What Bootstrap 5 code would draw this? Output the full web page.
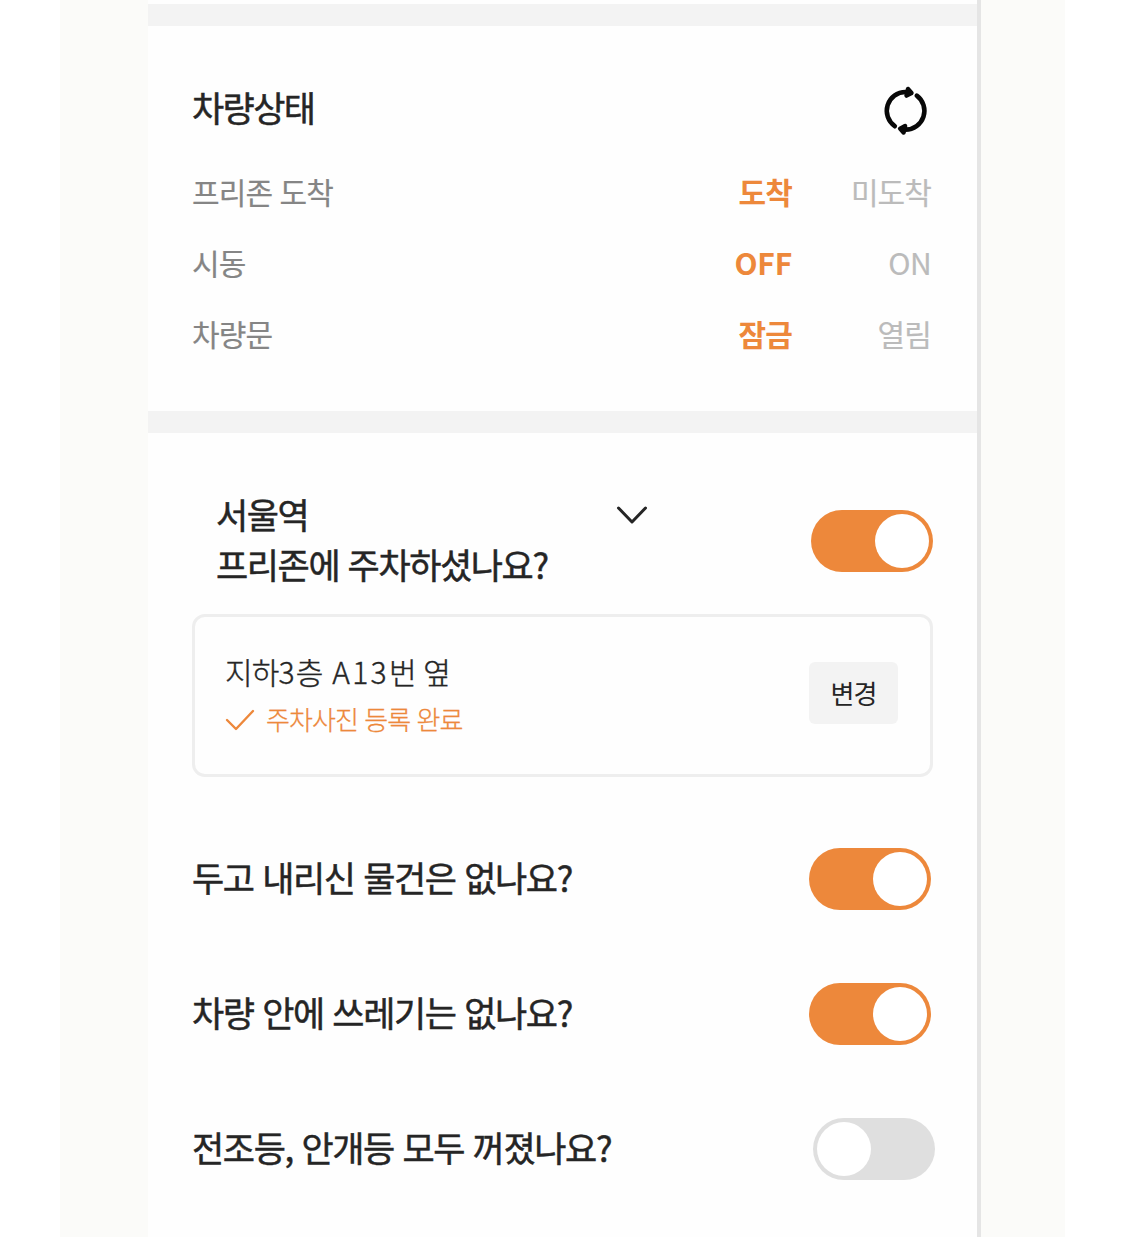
<!DOCTYPE html>
<html lang="ko">
<head>
<meta charset="utf-8">
<meta name="viewport" content="width=device-width, initial-scale=1">
<title>차량상태</title>
<link href="https://cdn.jsdelivr.net/npm/bootstrap@5.3.0/dist/css/bootstrap.min.css" rel="stylesheet">
<style>
  body { font-family: "Noto Sans CJK KR", sans-serif; background: #fff; color: #252525; }
  .stage { width: 1005px; height: 1237px; margin-left: 60px; padding-left: 88px; background: #fbfbf9; }
  .phone { width: 833px; height: 1237px; border-right: 4px solid #e5e5e5; background: #fefefe; padding-top: 4px; }
  .divider { height: 22px; background: #f3f3f3; }
  .status { height: 385px; padding: 56px 46px 0 44px; }
  .heading { font-size: 35px; font-weight: 400; -webkit-text-stroke: .5px currentColor; line-height: 50px; letter-spacing: -1.4px; white-space: nowrap; }
  .status-head { height: 50px; margin-bottom: 24px; }
  .status-head .heading { letter-spacing: -1.6px; }
  .refresh { width: 50px; height: 50px; margin-top: 4px; }
  .status-row { height: 71px; font-size: 30px; letter-spacing: -.9px; line-height: 71px; color: #858585; -webkit-text-stroke: .2px currentColor; }
  .picked { width: 120px; color: #ed883b; font-weight: 700; -webkit-text-stroke: 0; }
  .other { width: 139px; color: #bbb; }
  .latin { letter-spacing: -.2px; }
  .other.latin { letter-spacing: -.6px; padding-right: 0; }
  .checks { padding: 56px 44px 0 44px; }
  .zone { height: 125px; padding-left: 24px; }
  .zone .toggle { margin-top: 21px; }
  .chev { width: 34px; height: 22px; margin-left: 307px; }
  .toggle { width: 122px; height: 62px; border: 0; border-radius: 31px; padding: 0 4px; background: #ed883b; flex: none; }
  .toggle.off { background: #dfdfdf; }
  .knob { width: 54px; height: 54px; border-radius: 50%; background: #fff; }
  .spot { height: 163px; margin-bottom: 34px; border: 3px solid #eee; border-radius: 13px; padding: 0 32px 5px 30px; }
  .spot-text { padding-top: 3px; }
  .spot-name { font-size: 30px; font-weight: 300; line-height: 48px; letter-spacing: -.8px; -webkit-text-stroke: .4px currentColor; }
  .spot-name .num { letter-spacing: 1.2px; }
  .spot-name .bay { letter-spacing: 2.3px; margin-left: 2px; }
  .spot-done { font-size: 26px; font-weight: 300; line-height: 48px; letter-spacing: -.95px; color: #ed883b; -webkit-text-stroke: .3px currentColor; }
  .tick { width: 30px; height: 24px; margin-right: 11px; }
  .change { width: 89px; height: 62px; border: 0; border-radius: 6px; background: #f3f3f3; color: #252525; font-size: 26px; letter-spacing: -1px; padding: 0 0 2px; }
  .question { height: 135px; padding-right: 2px; }
  .question .heading { padding-bottom: 3px; letter-spacing: -1.35px; }
  .question:last-child { padding-right: 0; margin-right: -2px; }
</style>
<script src="https://cdn.jsdelivr.net/npm/bootstrap@5.3.0/dist/js/bootstrap.bundle.min.js"></script>
</head>
<body class="overflow-hidden">
<div class="stage">
  <main class="phone">
    <div class="divider"></div>
    <section class="status">
      <div class="status-head d-flex justify-content-between">
        <h1 class="heading m-0">차량상태</h1>
        <svg class="refresh" viewBox="0 0 50 50" fill="none" stroke="#080808" stroke-width="4.6" stroke-linecap="round">
          <path d="M13.8 40.2A18.8 18.8 0 0 1 24.5 6"/>
          <path d="M35.8 9.7A18.8 18.8 0 0 1 24.5 43.6"/>
          <path d="M27 3L30.5 7L25.5 9.6Z" fill="#080808" stroke-width="4.4" stroke-linejoin="round"/>
          <path d="M22.6 46.6L19.1 42.6L24.1 40Z" fill="#080808" stroke-width="4.4" stroke-linejoin="round"/>
        </svg>
      </div>
      <div class="status-row d-flex"><span class="me-auto">프리존 도착</span><span class="picked text-end">도착</span><span class="other text-end">미도착</span></div>
      <div class="status-row d-flex"><span class="me-auto">시동</span><span class="picked text-end latin">OFF</span><span class="other text-end latin">ON</span></div>
      <div class="status-row d-flex"><span class="me-auto">차량문</span><span class="picked text-end">잠금</span><span class="other text-end">열림</span></div>
    </section>
    <div class="divider"></div>
    <section class="checks">
      <div class="zone d-flex justify-content-between align-items-start">
        <div>
          <div class="d-flex align-items-center">
            <span class="heading">서울역</span>
            <svg class="chev" viewBox="0 0 34 22" fill="none" stroke="#252525" stroke-width="3" stroke-linecap="round" stroke-linejoin="round"><path d="M3.5 5L17 19L30.5 5"/></svg>
          </div>
          <div class="heading">프리존에 주차하셨나요?</div>
        </div>
        <button class="toggle d-flex align-items-center justify-content-end" type="button" role="switch" aria-checked="true"><span class="knob"></span></button>
      </div>
      <div class="spot d-flex align-items-center justify-content-between">
        <div class="spot-text">
          <div class="spot-name">지하<span class="num">3</span>층 <span class="bay">A13</span>번 옆</div>
          <div class="spot-done d-flex align-items-center">
            <svg class="tick" viewBox="0 0 30 24" fill="none" stroke="#ed883b" stroke-width="2.4" stroke-linecap="round" stroke-linejoin="round"><path d="M2 13L11 22L28 4"/></svg>
            <span>주차사진 등록 완료</span>
          </div>
        </div>
        <button class="change" type="button">변경</button>
      </div>
      <div class="question d-flex align-items-center justify-content-between">
        <span class="heading">두고 내리신 물건은 없나요?</span>
        <button class="toggle d-flex align-items-center justify-content-end" type="button" role="switch" aria-checked="true"><span class="knob"></span></button>
      </div>
      <div class="question d-flex align-items-center justify-content-between">
        <span class="heading">차량 안에 쓰레기는 없나요?</span>
        <button class="toggle d-flex align-items-center justify-content-end" type="button" role="switch" aria-checked="true"><span class="knob"></span></button>
      </div>
      <div class="question d-flex align-items-center justify-content-between">
        <span class="heading">전조등, 안개등 모두 꺼졌나요?</span>
        <button class="toggle off d-flex align-items-center" type="button" role="switch" aria-checked="false"><span class="knob"></span></button>
      </div>
    </section>
  </main>
</div>
</body>
</html>
